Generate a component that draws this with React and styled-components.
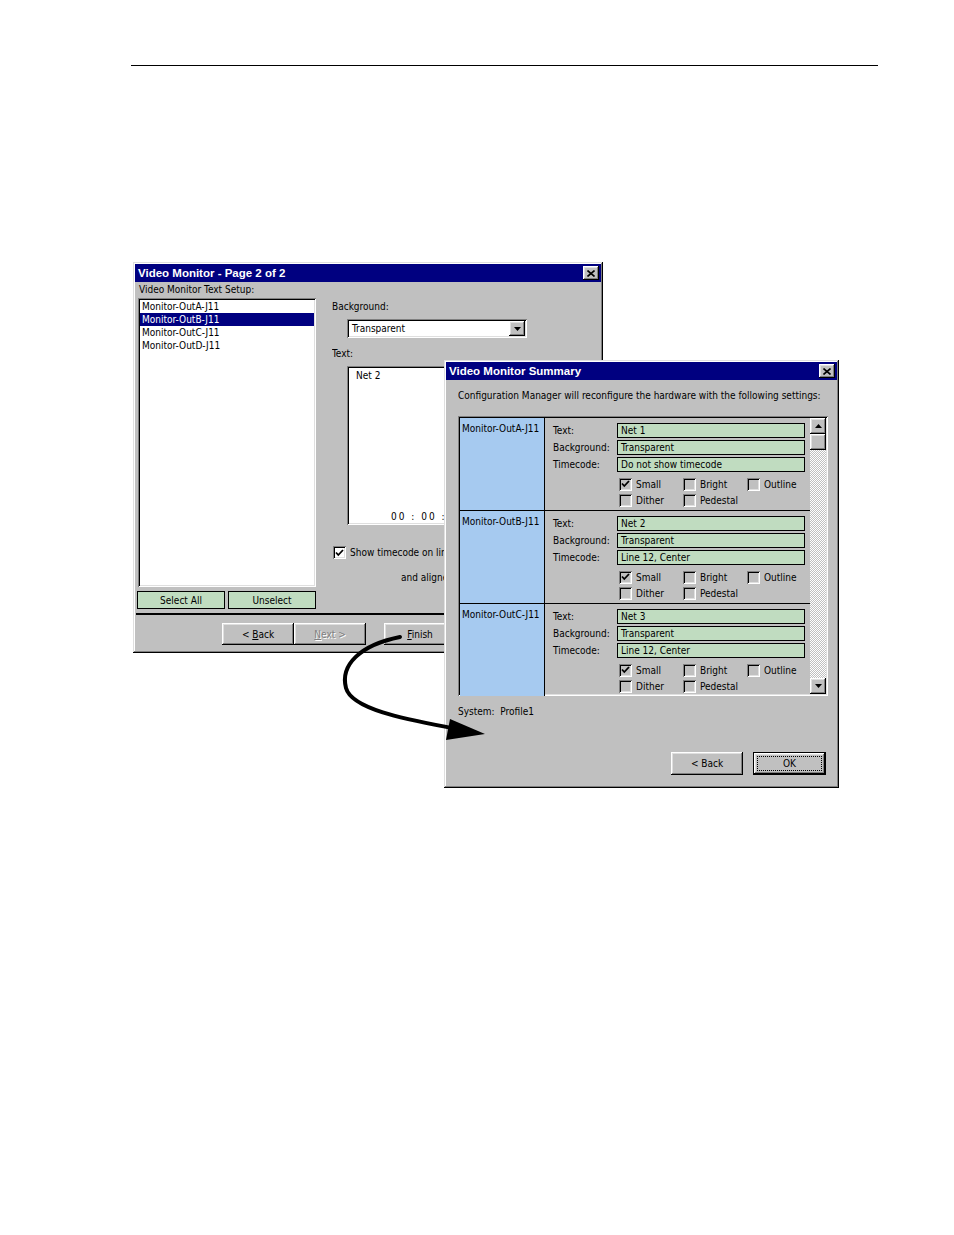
import React from 'react';
import styled, { createGlobalStyle, css } from 'styled-components';

const ui = `"DejaVu Sans Condensed", "Liberation Sans Narrow", "Liberation Sans", sans-serif`;
const titleFont = `"Liberation Sans", Arial, sans-serif`;

const GlobalStyle = createGlobalStyle`
  html, body { margin: 0; padding: 0; background: #fff; }
  body { font-family: ${ui}; font-size: 10px; color: #000; }
`;

const raised = css`
  box-shadow: inset -1px -1px #000, inset 1px 1px #fff, inset -2px -2px #808080, inset 2px 2px #dfdfdf;
`;
const sunken = css`
  box-shadow: inset 1px 1px #808080, inset -1px -1px #fff, inset 2px 2px #000, inset -2px -2px #dfdfdf;
`;

const Page = styled.div`
  width: 954px;
  height: 1235px;
  padding-top: 65px;
  box-sizing: border-box;
  overflow: hidden;
`;

const Rule = styled.div`
  width: 747px;
  margin-left: 131px;
  border-top: 1px solid #000;
`;

const Figure = styled.div`
  position: relative;
  margin-top: 196px;
  height: 540px;
`;

const Win = styled.div`
  width: ${p => p.$w}px;
  height: ${p => p.$h}px;
  box-sizing: border-box;
  padding: 2px;
  background: #c0c0c0;
  box-shadow: inset -1px -1px #000, inset 1px 1px #dfdfdf, inset -2px -2px #808080, inset 2px 2px #fff;
  display: flex;
  flex-direction: column;
`;

const LeftWin = styled(Win)`
  margin-left: 133px;
`;

const RightWin = styled(Win)`
  position: absolute;
  left: 444px;
  top: 98px;
  z-index: 2;
`;

const TitleBar = styled.div`
  height: 18px;
  flex: none;
  background: #000080;
  color: #fff;
  font: bold 11.5px ${titleFont};
  display: flex;
  align-items: center;
  justify-content: space-between;
  padding: 0 2px 0 3px;
`;

const CloseBtn = styled.div`
  width: 16px;
  height: 14px;
  background: #c0c0c0;
  ${raised};
  display: flex;
  align-items: center;
  justify-content: center;
`;

const Line = styled.div`
  height: 14px;
  line-height: 14px;
  white-space: nowrap;
  padding-left: ${p => p.$indent || 0}px;
  margin-top: ${p => p.$top || 0}px;
  max-width: ${p => (p.$clip ? `${p.$clip}px` : 'none')};
  overflow: hidden;
`;

const Main = styled.div`
  display: flex;
  margin-top: 1px;
  padding-left: 2px;
`;

const LeftCol = styled.div`
  width: 180px;
`;

const ListBox = styled.div`
  width: 178px;
  height: 289px;
  margin-left: 1px;
  box-sizing: border-box;
  padding: 2px;
  background: #fff;
  ${sunken};
`;

const ListItem = styled.div`
  height: 13px;
  line-height: 13px;
  padding-left: 2px;
  white-space: nowrap;
  background: ${p => (p.$sel ? '#000080' : 'transparent')};
  color: ${p => (p.$sel ? '#fff' : '#000')};
`;

const PairRow = styled.div`
  display: flex;
  gap: 3px;
  margin-top: 4px;
`;

const GreenBtn = styled.div`
  width: 88px;
  height: 18px;
  box-sizing: border-box;
  border: 1px solid #000;
  background: #c0dcc0;
  display: flex;
  align-items: center;
  justify-content: center;
`;

const RightCol = styled.div`
  margin-left: 15px;
  padding-top: 2px;
  width: 260px;
`;

const Combo = styled.div`
  width: 180px;
  height: 19px;
  margin: 5px 0 0 15px;
  box-sizing: border-box;
  padding: 2px;
  padding-left: 5px;
  background: #fff;
  ${sunken};
  display: flex;
  align-items: center;
  justify-content: space-between;
`;

const DropBtn = styled.div`
  width: 16px;
  height: 15px;
  background: #c0c0c0;
  ${raised};
  display: flex;
  align-items: center;
  justify-content: center;
`;

const TextBox = styled.div`
  width: 99px;
  height: 159px;
  margin: 5px 0 0 15px;
  box-sizing: border-box;
  padding: 4px 0 3px 9px;
  background: #fff;
  ${sunken};
  display: flex;
  flex-direction: column;
  justify-content: space-between;
  overflow: hidden;
`;

const Timecode = styled.div`
  padding-left: 35px;
  letter-spacing: 2px;
  white-space: nowrap;
`;

const CheckRow = styled.div`
  display: flex;
  align-items: center;
  gap: 4px;
  margin: ${p => p.$m || 0};
  white-space: nowrap;
  max-width: ${p => (p.$clip ? `${p.$clip}px` : 'none')};
  overflow: hidden;
`;

const Box = styled.div`
  width: 13px;
  height: 13px;
  flex: none;
  box-sizing: border-box;
  background: ${p => (p.$white ? '#fff' : '#c0c0c0')};
  ${sunken};
  display: flex;
  align-items: center;
  justify-content: center;
`;

const Separator = styled.div`
  margin: 4px 1px 0;
  border-top: 2px solid #000;
`;

const ButtonRow = styled.div`
  display: flex;
  gap: ${p => p.$gap || 0}px;
  margin: ${p => p.$m};
  justify-content: ${p => p.$justify || 'flex-start'};
`;

const PushButton = styled.div`
  position: relative;
  width: ${p => p.$w || 72}px;
  height: ${p => p.$h || 22}px;
  margin-left: ${p => p.$ml || 0}px;
  background: #c0c0c0;
  ${raised};
  display: flex;
  align-items: center;
  justify-content: center;
  color: ${p => (p.$disabled ? '#808080' : '#000')};
  text-shadow: ${p => (p.$disabled ? '1px 1px #fff' : 'none')};
  ${p =>
    p.$default &&
    css`
      box-shadow: inset 0 0 0 1px #000, inset -2px -2px #000, inset 2px 2px #fff,
        inset -3px -3px #808080, inset 3px 3px #dfdfdf;
      &::after {
        content: '';
        position: absolute;
        inset: 4px;
        border: 1px dotted #000;
      }
    `}
`;

/* summary window */

const SummaryBody = styled.div`
  padding: 0 11px 0 12px;
  display: flex;
  flex-direction: column;
`;

const Panel = styled.div`
  width: 370px;
  height: 280px;
  margin-top: 13px;
  box-sizing: border-box;
  padding: 2px;
  ${sunken};
  display: flex;
  overflow: hidden;
`;

const Rows = styled.div`
  width: 350px;
`;

const MonitorRow = styled.div`
  display: flex;
  height: 92px;
  border-bottom: 1px solid #000;
`;

const NameCell = styled.div`
  width: 82px;
  flex: none;
  background: #a6caf0;
  border-right: 1px solid #000;
  padding: 5px 0 0 2px;
  white-space: nowrap;
`;

const Settings = styled.div`
  padding: 5px 0 0 8px;
`;

const FieldGrid = styled.div`
  display: grid;
  grid-template-columns: 64px 188px;
  grid-auto-rows: 15px;
  row-gap: 2px;
  align-items: center;
`;

const Field = styled.div`
  height: 15px;
  box-sizing: border-box;
  border: 1px solid #000;
  background: #c0dcc0;
  padding-left: 3px;
  line-height: 13px;
  white-space: nowrap;
`;

const Options = styled.div`
  display: grid;
  grid-template-columns: repeat(3, 64px);
  grid-auto-rows: 16px;
  align-items: center;
  margin: 4px 0 0 66px;
`;

const ScrollBar = styled.div`
  width: 16px;
  display: flex;
  flex-direction: column;
  background-color: #fff;
  background-image: repeating-conic-gradient(#c0c0c0 0% 25%, #fff 0% 50%);
  background-size: 2px 2px;
`;

const ScrollBtn = styled.div`
  width: 16px;
  height: 16px;
  flex: none;
  background: #c0c0c0;
  ${raised};
  display: flex;
  align-items: center;
  justify-content: center;
  margin-top: ${p => (p.$end ? 'auto' : '0')};
`;

const Arrow = styled.svg`
  position: absolute;
  left: 0;
  top: 0;
  z-index: 3;
  pointer-events: none;
`;

const CloseIcon = () => (
  <svg width="8" height="7" viewBox="0 0 8 7">
    <path d="M0.5 0.5 L7.5 6.5 M7.5 0.5 L0.5 6.5" stroke="#000" strokeWidth="1.6" />
  </svg>
);

const Tri = ({ down }) => (
  <svg width="7" height="4" viewBox="0 0 7 4">
    <path d={down ? 'M0 0 H7 L3.5 4 Z' : 'M0 4 H7 L3.5 0 Z'} fill="#000" />
  </svg>
);

const Tick = () => (
  <svg width="9" height="8" viewBox="0 0 9 8">
    <path d="M1 3.5 L3.3 6 L8 1" stroke="#000" strokeWidth="1.8" fill="none" />
  </svg>
);

const Check = ({ label, checked, white }) => (
  <CheckRow>
    <Box $white={white}>{checked && <Tick />}</Box>
    <span>{label}</span>
  </CheckRow>
);

const monitors = ['Monitor-OutA-J11', 'Monitor-OutB-J11', 'Monitor-OutC-J11', 'Monitor-OutD-J11'];

const summary = [
  { name: 'Monitor-OutA-J11', text: 'Net 1', bg: 'Transparent', tc: 'Do not show timecode' },
  { name: 'Monitor-OutB-J11', text: 'Net 2', bg: 'Transparent', tc: 'Line 12, Center' },
  { name: 'Monitor-OutC-J11', text: 'Net 3', bg: 'Transparent', tc: 'Line 12, Center' },
];

const App = () => (
  <Page>
    <GlobalStyle />
    <Rule />
    <Figure>
      <LeftWin $w={470} $h={391}>
        <TitleBar>
          <span>Video Monitor - Page 2 of 2</span>
          <CloseBtn><CloseIcon /></CloseBtn>
        </TitleBar>
        <Line $indent={4} $top={1}>Video Monitor Text Setup:</Line>
        <Main>
          <LeftCol>
            <ListBox>
              {monitors.map((m, i) => (
                <ListItem key={m} $sel={i === 1}>{m}</ListItem>
              ))}
            </ListBox>
            <PairRow>
              <GreenBtn>Select All</GreenBtn>
              <GreenBtn>Unselect</GreenBtn>
            </PairRow>
          </LeftCol>
          <RightCol>
            <Line>Background:</Line>
            <Combo>
              <span>Transparent</span>
              <DropBtn><Tri down /></DropBtn>
            </Combo>
            <Line $top={9}>Text:</Line>
            <TextBox>
              <div>Net 2</div>
              <Timecode>00 : 00 : 00 : 00</Timecode>
            </TextBox>
            <CheckRow $m="21px 0 0 1px" $clip={111}>
              <Box $white><Tick /></Box>
              <span>Show timecode on lines</span>
            </CheckRow>
            <Line $indent={69} $top={12} $clip={112}>and aligned</Line>
          </RightCol>
        </Main>
        <Separator />
        <ButtonRow $m="8px 0 0 87px">
          <PushButton><span>&lt; <u>B</u>ack</span></PushButton>
          <PushButton $disabled><span><u>N</u>ext &gt;</span></PushButton>
          <PushButton $ml={18}><span><u>F</u>inish</span></PushButton>
        </ButtonRow>
      </LeftWin>

      <RightWin $w={395} $h={428}>
        <TitleBar>
          <span>Video Monitor Summary</span>
          <CloseBtn><CloseIcon /></CloseBtn>
        </TitleBar>
        <SummaryBody>
          <Line $top={9}>Configuration Manager will reconfigure the hardware with the following settings:</Line>
          <Panel>
            <Rows>
              {summary.map(s => (
                <MonitorRow key={s.name}>
                  <NameCell>{s.name}</NameCell>
                  <Settings>
                    <FieldGrid>
                      <span>Text:</span>
                      <Field>{s.text}</Field>
                      <span>Background:</span>
                      <Field>{s.bg}</Field>
                      <span>Timecode:</span>
                      <Field>{s.tc}</Field>
                    </FieldGrid>
                    <Options>
                      <Check label="Small" checked />
                      <Check label="Bright" />
                      <Check label="Outline" />
                      <Check label="Dither" />
                      <Check label="Pedestal" />
                    </Options>
                  </Settings>
                </MonitorRow>
              ))}
            </Rows>
            <ScrollBar>
              <ScrollBtn><Tri /></ScrollBtn>
              <ScrollBtn />
              <ScrollBtn $end><Tri down /></ScrollBtn>
            </ScrollBar>
          </Panel>
          <Line $top={9}>System:&nbsp; Profile1</Line>
          <ButtonRow $m="33px 0 0 0" $gap={10} $justify="flex-end">
            <PushButton $h={23}>&lt; Back</PushButton>
            <PushButton $w={73} $h={23} $default>OK</PushButton>
          </ButtonRow>
        </SummaryBody>
      </RightWin>

      <Arrow width="954" height="540" viewBox="0 262 954 540">
        <path
          d="M400 637 C360 645 340 665 346 688 C352 710 410 720 452 728"
          stroke="#000"
          strokeWidth="4"
          fill="none"
          strokeLinecap="round"
        />
        <polygon points="450,719 485,734 446,740" fill="#000" />
      </Arrow>
    </Figure>
  </Page>
);

export default App;
